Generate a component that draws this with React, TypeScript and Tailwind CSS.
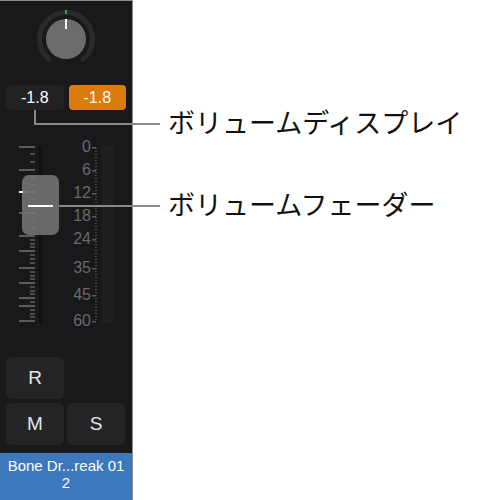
const longTicks = [147, 170, 192, 213, 236, 251, 268, 283, 298, 306, 321];
const shortTicks = [
  154, 162, 177, 185, 199, 206, 221, 228, 240, 244, 247, 255, 259, 263, 272, 276, 279, 287, 291, 294, 302, 310,
  314, 317,
];
const scaleLabels = [
  { text: '0', y: 147 },
  { text: '6', y: 170 },
  { text: '12', y: 193 },
  { text: '18', y: 216 },
  { text: '24', y: 239 },
  { text: '35', y: 268 },
  { text: '45', y: 295 },
  { text: '60', y: 321 },
];

// fader area starts at y=140 of the page
const TOP = 140;

const dots: number[] = [];
for (let y = 148; y <= 321; y += 3) dots.push(y);

function Knob() {
  return (
    <svg width="64" height="64" viewBox="0 0 64 64">
      <path
        d="M 15.1 52.3 A 26.5 26.5 0 1 1 48.9 52.3"
        fill="none"
        stroke="#2a2a2d"
        strokeWidth="5"
        strokeLinecap="round"
      />
      <rect x="31" y="3" width="2" height="4" fill="#2fa04c" />
      <circle cx="32" cy="32" r="20" fill="#6c6c6d" />
      <rect x="31" y="12" width="2" height="10" fill="#ffffff" />
    </svg>
  );
}

function FaderScale() {
  return (
    <div className="relative h-[190px] w-full">
      <svg className="absolute inset-0" width="132" height="190" viewBox="0 0 132 190">
        <rect x="39" y={146 - TOP} width="3" height="177" fill="#111113" />
        {longTicks.map((y) => (
          <rect key={`l${y}`} x="19" y={y - TOP - 1} width="16" height="2" fill="#5b5b5e" />
        ))}
        {shortTicks.map((y) => (
          <rect key={`s${y}`} x="30" y={y - TOP - 1} width="5" height="2" fill="#4d4d50" />
        ))}
        {dots.map((y) => (
          <rect key={`d${y}`} x="95" y={y - TOP} width="2" height="1" fill="#4a4a4d" />
        ))}
        {scaleLabels.map((l) => (
          <rect key={`t${l.y}`} x="92" y={l.y - TOP} width="4" height="1.5" fill="#5b5b5e" />
        ))}
        <rect x="102" y={146 - TOP} width="11" height="177" fill="#1f1f22" />
      </svg>
      {scaleLabels.map((l) => (
        <span
          key={l.text}
          className="absolute right-[41px] -translate-y-1/2 text-[16px] leading-none text-[#69696c]"
          style={{ top: l.y - TOP }}
        >
          {l.text}
        </span>
      ))}
      <div className="absolute left-[22px] top-[35px] h-[60px] w-[37px] rounded-[7px] bg-[#78787a]/85">
        <div className="absolute left-[6px] top-[30px] h-[2px] w-[25px] bg-white" />
      </div>
      <div className="absolute left-[19px] top-[51px] h-[2px] w-[4px] bg-white" />
    </div>
  );
}

export default function App() {
  return (
    <div className="relative flex h-[500px] w-[484px] overflow-hidden bg-white [font-family:'Liberation_Sans',Arial,sans-serif]">
      <div className="flex h-[500px] w-[133px] shrink-0 flex-col border-r border-t border-[#8d8d8f] bg-[#19191b]">
        <div className="flex justify-center pt-[6px]">
          <Knob />
        </div>
        <div className="mt-[14px] flex gap-[5px] px-[6px]">
          <div className="flex h-[25px] flex-1 items-center justify-center rounded-[4px] bg-[#222225] text-[16px] text-white">
            -1.8
          </div>
          <div className="flex h-[25px] flex-1 items-center justify-center rounded-[4px] bg-[#db7b0c] text-[16px] text-white">
            -1.8
          </div>
        </div>
        <div className="mt-[30px]">
          <FaderScale />
        </div>
        <div className="mt-[27px] flex flex-col gap-[4px] px-[6px]">
          <div className="flex gap-[3px]">
            <button className="flex h-[42px] w-[58px] items-center justify-center rounded-[6px] bg-[#252528] text-[19px] text-[#e4e4e6]">
              R
            </button>
          </div>
          <div className="flex gap-[3px]">
            <button className="flex h-[42px] w-[58px] items-center justify-center rounded-[6px] bg-[#252528] text-[19px] text-[#e4e4e6]">
              M
            </button>
            <button className="flex h-[42px] w-[58px] items-center justify-center rounded-[6px] bg-[#252528] text-[19px] text-[#e4e4e6]">
              S
            </button>
          </div>
        </div>
        <div className="mt-auto h-[47px] bg-[#3c79bc] pt-[4px] text-center text-[15px] leading-[17px] text-white">
          <div>Bone Dr...reak 01</div>
          <div>2</div>
        </div>
      </div>

      <div className="flex flex-col pl-[35px] pt-[107px] text-[27px] leading-[30px] text-[#111] [font-family:'Noto_Sans_CJK_JP','Noto_Sans',sans-serif]">
        <div className="whitespace-nowrap">ボリュームディスプレイ</div>
        <div className="mt-[52px] whitespace-nowrap">ボリュームフェーダー</div>
      </div>

      <svg className="pointer-events-none absolute inset-0" width="484" height="500" viewBox="0 0 484 500">
        <polyline points="35,110 35,124 160,124" fill="none" stroke="#8a8a8c" strokeWidth="2" />
        <line x1="59" y1="206" x2="160" y2="206" stroke="#8a8a8c" strokeWidth="2" />
      </svg>
    </div>
  );
}
